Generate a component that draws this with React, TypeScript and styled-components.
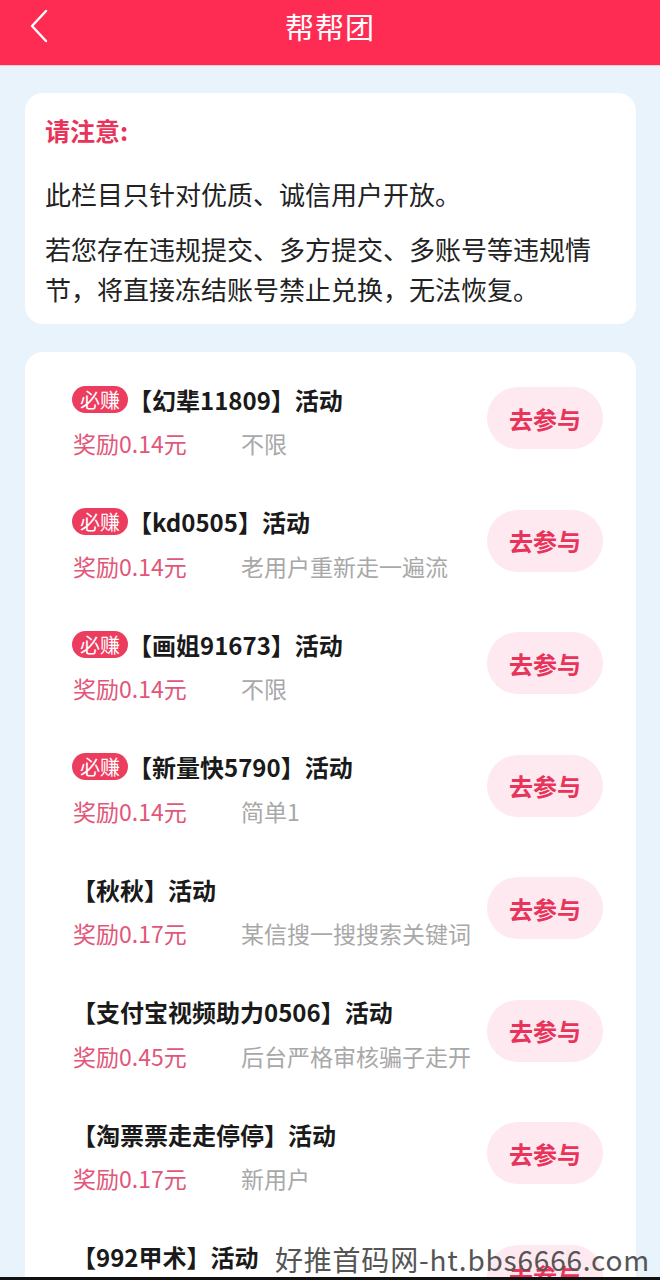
import React from 'react';
import styled, { createGlobalStyle } from 'styled-components';

const GlobalStyle = createGlobalStyle`
  html, body {
    margin: 0;
    padding: 0;
    background: #e9f3fb;
  }
  body {
    font-family: 'Noto Sans CJK SC', 'Noto Sans', sans-serif;
  }
  * {
    box-sizing: border-box;
  }
`;

const Page = styled.div`
  position: relative;
  width: 660px;
  height: 1280px;
  overflow: hidden;
  background: #e9f3fb;
`;

const Header = styled.header`
  position: relative;
  height: 66px;
  display: flex;
  align-items: center;
  justify-content: center;
  background: #fe2c53;
  border-bottom: 1px solid #f6c9d3;
`;

const BackButton = styled.button`
  position: absolute;
  left: 22px;
  top: 8px;
  width: 34px;
  height: 36px;
  padding: 0;
  border: none;
  background: transparent;
  display: flex;
  align-items: center;
  justify-content: center;
`;

const HeaderTitle = styled.h1`
  margin: 0 0 14px;
  font-size: 29px;
  font-weight: 400;
  color: #ffffff;
  letter-spacing: 1px;
`;

const Content = styled.main`
  display: flex;
  flex-direction: column;
  gap: 28px;
  padding: 27px 24px 0 25px;
`;

const Card = styled.section`
  background: #ffffff;
  border-radius: 18px;
`;

const NoticeCard = styled(Card)`
  padding: 17px 20px 15px 20px;
`;

const NoticeTitle = styled.div`
  font-size: 25px;
  line-height: 40px;
  font-weight: 700;
  color: #e8335a;
  margin-bottom: 24px;
`;

const NoticeText = styled.p`
  margin: 0;
  font-size: 26px;
  line-height: 40px;
  color: #222222;

  & + & {
    margin-top: 15px;
  }
`;

const ListCard = styled(Card)`
  padding: 8px 0 0;
`;

const Row = styled.div`
  height: 122.5px;
  display: flex;
  align-items: center;
  justify-content: space-between;
  padding: 0 33px 0 47px;
`;

const Info = styled.div`
  display: flex;
  flex-direction: column;
  gap: 12px;
`;

const TitleLine = styled.div`
  display: flex;
  align-items: center;
  height: 32px;
  font-size: 24px;
  font-weight: 700;
  color: #1a1a1a;
`;

const Badge = styled.span`
  display: inline-flex;
  align-items: center;
  justify-content: center;
  height: 27px;
  padding: 0 8px;
  border-radius: 14px;
  background: #ec3d5f;
  color: #ffffff;
  font-size: 20px;
  font-weight: 400;
`;

const MetaLine = styled.div`
  display: flex;
  align-items: center;
  height: 32px;
  font-size: 23px;
`;

const Reward = styled.span`
  width: 169px;
  color: #e25679;
  padding-left: 1px;
`;

const Desc = styled.span`
  color: #a8a8a8;
`;

const JoinButton = styled.button`
  width: 116px;
  height: 62px;
  margin-bottom: 6px;
  border: none;
  border-radius: 31px;
  background: #fde9ef;
  color: #e8335a;
  font-family: inherit;
  font-size: 24px;
  font-weight: 700;
  padding: 0;
`;

const Watermark = styled.div`
  position: absolute;
  right: 10px;
  bottom: 4px;
  font-family: 'Noto Sans CJK SC', 'DejaVu Sans', sans-serif;
  font-size: 28px;
  color: #555555;
  letter-spacing: 0.8px;
  line-height: 34px;
`;

const BottomEdge = styled.div`
  position: absolute;
  left: 0;
  right: 0;
  bottom: 0;
  height: 3px;
  background: #111111;
`;

type Task = {
  name: string;
  reward: string;
  desc: string;
  hot?: boolean;
};

const tasks: Task[] = [
  { name: '【幻辈11809】活动', reward: '奖励0.14元', desc: '不限', hot: true },
  { name: '【kd0505】活动', reward: '奖励0.14元', desc: '老用户重新走一遍流', hot: true },
  { name: '【画姐91673】活动', reward: '奖励0.14元', desc: '不限', hot: true },
  { name: '【新量快5790】活动', reward: '奖励0.14元', desc: '简单1', hot: true },
  { name: '【秋秋】活动', reward: '奖励0.17元', desc: '某信搜一搜搜索关键词' },
  { name: '【支付宝视频助力0506】活动', reward: '奖励0.45元', desc: '后台严格审核骗子走开' },
  { name: '【淘票票走走停停】活动', reward: '奖励0.17元', desc: '新用户' },
  { name: '【992甲术】活动', reward: '奖励0.17元', desc: '不限' },
];

function BackIcon() {
  return (
    <svg width="20" height="34" viewBox="0 0 20 34" fill="none">
      <path d="M17 2 L3 17 L17 32" stroke="#ffffff" strokeWidth="2.4" strokeLinecap="round" strokeLinejoin="round" />
    </svg>
  );
}

export default function App() {
  return (
    <Page>
      <GlobalStyle />
      <Header>
        <BackButton aria-label="返回">
          <BackIcon />
        </BackButton>
        <HeaderTitle>帮帮团</HeaderTitle>
      </Header>

      <Content>
        <NoticeCard>
          <NoticeTitle>请注意:</NoticeTitle>
          <NoticeText>此栏目只针对优质、诚信用户开放。</NoticeText>
          <NoticeText>若您存在违规提交、多方提交、多账号等违规情节，将直接冻结账号禁止兑换，无法恢复。</NoticeText>
        </NoticeCard>

        <ListCard>
          {tasks.map((t) => (
            <Row key={t.name}>
              <Info>
                <TitleLine>
                  {t.hot ? <Badge>必赚</Badge> : null}
                  {t.name}
                </TitleLine>
                <MetaLine>
                  <Reward>{t.reward}</Reward>
                  <Desc>{t.desc}</Desc>
                </MetaLine>
              </Info>
              <JoinButton>去参与</JoinButton>
            </Row>
          ))}
        </ListCard>
      </Content>

      <Watermark>好推首码网-ht.bbs6666.com</Watermark>
      <BottomEdge />
    </Page>
  );
}
